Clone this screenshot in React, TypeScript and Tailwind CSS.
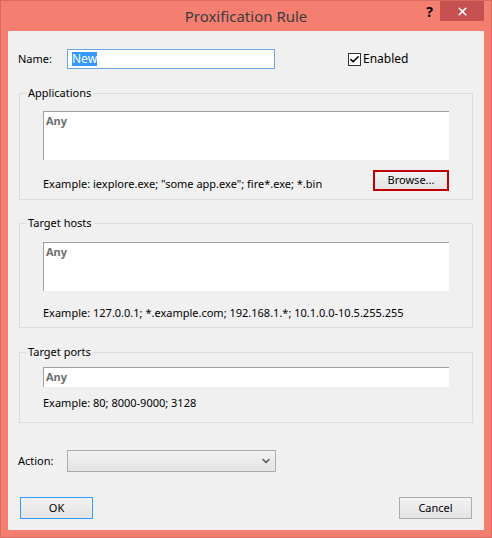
import { Check, ChevronDown, X } from 'lucide-react';

const font = "font-['Segoe_UI','Noto_Sans',sans-serif]";

function Group({ label, className, children }: { label: string; className: string; children: React.ReactNode }) {
  return (
    <div className={`relative mx-[11px] border border-[#dcdcdc] ${className}`}>
      <span className="absolute -top-[9px] left-[6px] bg-[#f0f0f0] px-[2px] leading-[16px]">{label}</span>
      {children}
    </div>
  );
}

function Box({ h }: { h: string }) {
  return (
    <div className={`ml-[23px] w-[406px] ${h} border-l border-t border-[#a0a0a0] bg-white px-[2px] pt-[1px] font-bold text-[#6d6d6d]`}>
      Any
    </div>
  );
}

function Btn({ label, focused }: { label: string; focused?: boolean }) {
  return (
    <button
      className={`h-[22px] w-[73px] border bg-gradient-to-b from-[#f2f2f2] to-[#e4e4e4] text-center leading-[20px] ${
        focused ? 'border-[#3399ff]' : 'border-[#acacac]'
      }`}
    >
      {label}
    </button>
  );
}

export default function App() {
  return (
    <div className={`h-[538px] w-[492px] border border-[#d96a5e] bg-[#f47f71] text-[11px] text-black ${font}`}>
      {/* title bar */}
      <div className="relative flex h-[30px] items-center justify-center">
        <span className="text-[15px] text-[#3c3c3c]">Proxification Rule</span>
        <span className="absolute right-[58px] top-[1px] text-[14px] font-bold leading-[20px]">?</span>
        <div className="absolute right-[7px] top-0 flex h-[20px] w-[44px] items-center justify-center bg-[#c75050]">
          <X size={13} strokeWidth={3} color="white" />
        </div>
      </div>

      {/* client */}
      <div className="mx-[7px] h-[499px] bg-[#f0f0f0]">
        <div className="flex items-center pt-[18px]">
          <span className="ml-[10px] w-[49px]">Name:</span>
          <div className="flex h-[20px] w-[208px] items-center border border-[#6fa6de] bg-white px-[4px]">
            <span className="bg-[#3399ff] text-[12px] leading-[14px] text-white">New</span>
          </div>
          <div className="ml-[73px] flex items-center gap-[2px]">
            <div className="flex h-[13px] w-[13px] items-center justify-center border border-[#333] bg-white">
              <Check size={11} strokeWidth={3.5} color="black" />
            </div>
            <span className="text-[12px]">Enabled</span>
          </div>
        </div>

        <Group label="Applications" className="mt-[24px] h-[107px]">
          <div className="pt-[17px]">
            <Box h="h-[49px]" />
            <div className="mt-[8px] flex items-center">
              <span className="ml-[23px] mt-[8px]">Example: iexplore.exe; "some app.exe"; fire*.exe; *.bin</span>
              <div className="ml-auto mr-[23px] border-2 border-[#c00000]">
                <button className="block h-[17px] w-[72px] bg-gradient-to-b from-[#f2f2f2] to-[#e4e4e4] leading-[16px]">
                  Browse...
                </button>
              </div>
            </div>
          </div>
        </Group>

        <Group label="Target hosts" className="mt-[23px] h-[105px]">
          <div className="pt-[18px]">
            <Box h="h-[49px]" />
            <div className="ml-[23px] mt-[14px]">Example: 127.0.0.1; *.example.com; 192.168.1.*; 10.1.0.0-10.5.255.255</div>
          </div>
        </Group>

        <Group label="Target ports" className="mt-[24px] h-[71px]">
          <div className="pt-[14px]">
            <Box h="h-[20px]" />
            <div className="ml-[23px] mt-[8px]">Example: 80; 8000-9000; 3128</div>
          </div>
        </Group>

        <div className="mt-[27px] flex items-center">
          <span className="ml-[10px] w-[49px]">Action:</span>
          <div className="flex h-[22px] w-[209px] items-center justify-end border border-[#acacac] bg-gradient-to-b from-[#f2f2f2] to-[#e4e4e4] pr-[3px]">
            <ChevronDown size={12} strokeWidth={3} color="#555" />
          </div>
        </div>

        <div className="mt-[25px] flex justify-between px-[12px]">
          <Btn label="OK" focused />
          <Btn label="Cancel" />
        </div>
      </div>
    </div>
  );
}
